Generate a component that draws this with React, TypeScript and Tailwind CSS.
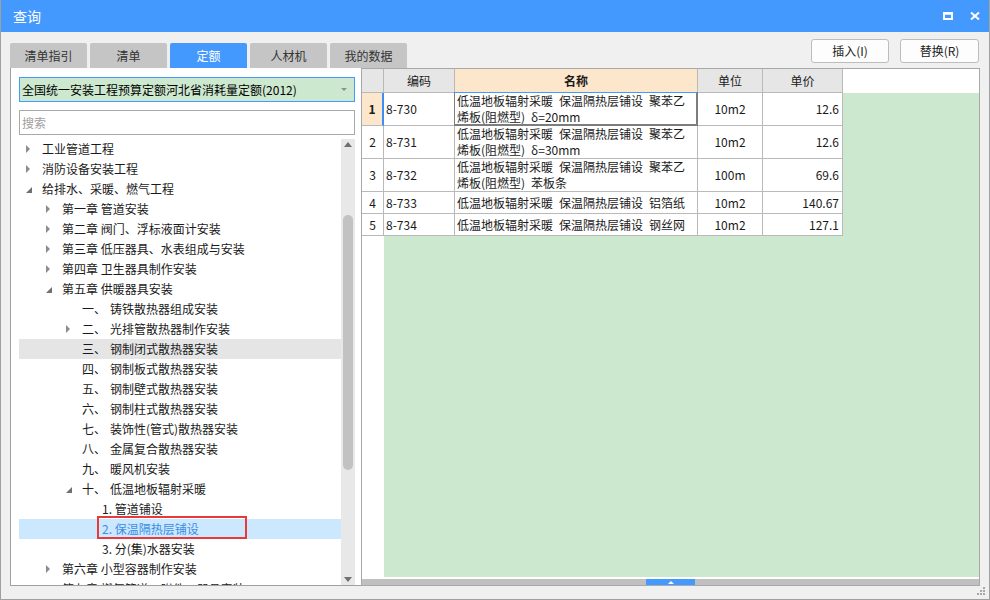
import React from "react";

type Node = { lvl: number; arrow?: "r" | "d"; num?: string; text: string; hover?: boolean; sel?: boolean };

const tree: Node[] = [
  { lvl: 0, arrow: "r", text: "工业管道工程" },
  { lvl: 0, arrow: "r", text: "消防设备安装工程" },
  { lvl: 0, arrow: "d", text: "给排水、采暖、燃气工程" },
  { lvl: 1, arrow: "r", text: "第一章 管道安装" },
  { lvl: 1, arrow: "r", text: "第二章 阀门、浮标液面计安装" },
  { lvl: 1, arrow: "r", text: "第三章 低压器具、水表组成与安装" },
  { lvl: 1, arrow: "r", text: "第四章 卫生器具制作安装" },
  { lvl: 1, arrow: "d", text: "第五章 供暖器具安装" },
  { lvl: 2, num: "一、", text: "铸铁散热器组成安装" },
  { lvl: 2, arrow: "r", num: "二、", text: "光排管散热器制作安装" },
  { lvl: 2, num: "三、", text: "钢制闭式散热器安装", hover: true },
  { lvl: 2, num: "四、", text: "钢制板式散热器安装" },
  { lvl: 2, num: "五、", text: "钢制壁式散热器安装" },
  { lvl: 2, num: "六、", text: "钢制柱式散热器安装" },
  { lvl: 2, num: "七、", text: "装饰性(管式)散热器安装" },
  { lvl: 2, num: "八、", text: "金属复合散热器安装" },
  { lvl: 2, num: "九、", text: "暖风机安装" },
  { lvl: 2, arrow: "d", num: "十、", text: "低温地板辐射采暖" },
  { lvl: 3, text: "1. 管道铺设" },
  { lvl: 3, text: "2. 保温隔热层铺设", sel: true },
  { lvl: 3, text: "3. 分(集)水器安装" },
  { lvl: 1, arrow: "r", text: "第六章 小型容器制作安装" },
  { lvl: 1, arrow: "r", text: "第七章 燃气管道、附件、器具安装" },
];

const indent = ["pl-[7px]", "pl-[27px]", "pl-[47px]", "pl-[67px]"];

const rows = [
  { n: "1", code: "8-730", name: ["低温地板辐射采暖\u2002保温隔热层铺设\u2002聚苯乙", "烯板(阻燃型)\u2002δ=20mm"], unit: "10m2", price: "12.6", h: "h-[33px]" },
  { n: "2", code: "8-731", name: ["低温地板辐射采暖\u2002保温隔热层铺设\u2002聚苯乙", "烯板(阻燃型)\u2002δ=30mm"], unit: "10m2", price: "12.6", h: "h-[33px]" },
  { n: "3", code: "8-732", name: ["低温地板辐射采暖\u2002保温隔热层铺设\u2002聚苯乙", "烯板(阻燃型)\u2002苯板条"], unit: "100m", price: "69.6", h: "h-[33px]" },
  { n: "4", code: "8-733", name: ["低温地板辐射采暖\u2002保温隔热层铺设\u2002铝箔纸"], unit: "10m2", price: "140.67", h: "h-[22px]" },
  { n: "5", code: "8-734", name: ["低温地板辐射采暖\u2002保温隔热层铺设\u2002钢丝网"], unit: "10m2", price: "127.1", h: "h-[22px]" },
];

function Arrow({ kind }: { kind?: "r" | "d" }) {
  if (kind === "r")
    return (
      <svg width="5" height="8" viewBox="0 0 5 8">
        <polygon points="0,0 4,4 0,8" fill="#8c8c8c" />
      </svg>
    );
  if (kind === "d")
    return (
      <svg width="6" height="6" viewBox="0 0 6 6" className="mt-[2px]">
        <polygon points="6,0 6,6 0,6" fill="#707070" />
      </svg>
    );
  return null;
}

export default function App() {
  const tabs = ["清单指引", "清单", "定额", "人材机", "我的数据"];
  return (
    <div className="w-[990px] h-[600px] flex flex-col bg-[#f0f0f0] border-l border-r border-b border-[#a0a0a0] relative overflow-hidden font-['Noto_Sans_CJK_SC','Microsoft_YaHei',sans-serif] text-[12px] text-[#1a1a1a]">
      {/* title bar */}
      <div className="h-[32px] shrink-0 bg-[#4499ff] flex items-center pl-[12px] pr-[9px] text-white">
        <span className="text-[14px]">查询</span>
        <div className="ml-auto flex items-center gap-[17px]">
          <svg width="10" height="8" viewBox="0 0 10 8">
            <rect x="1" y="1.5" width="8" height="5.5" fill="none" stroke="#fff" strokeWidth="2" />
            <rect x="0" y="0" width="10" height="2.5" fill="#fff" />
          </svg>
          <svg width="10" height="8" viewBox="0 0 10 8">
            <path d="M1 0.5 L9 7.5 M9 0.5 L1 7.5" stroke="#fff" strokeWidth="2" />
          </svg>
        </div>
      </div>

      {/* body */}
      <div className="flex-1 min-h-0 flex flex-row pl-[9px] pr-[9px] pb-[13px]">
        {/* left column */}
        <div className="w-[351px] shrink-0 flex flex-col pt-[11px] relative z-10">
          <div className="flex gap-[3px] h-[25px] shrink-0 w-[397px]">
            {tabs.map((t) => (
              <div
                key={t}
                className={
                  t === "定额"
                    ? "w-[77px] shrink-0 rounded-t-[2px] bg-[#4499ff] text-white flex items-center justify-center text-[12px]"
                    : "w-[77px] shrink-0 rounded-t-[2px] bg-[#c5c5c5] text-[#333] flex items-center justify-center text-[12px]"
                }
              >
                {t}
              </div>
            ))}
          </div>
          <div className="flex-1 min-h-0 bg-white border-l border-b border-[#a0a0a0] pl-[8px] pr-[6px] pt-[9px] flex flex-col">
            <div className="h-[25px] shrink-0 border border-[#4499ff] bg-[#cce8cf] flex items-center pl-[2px] pr-[7px] text-[12px] text-black">
              <span className="whitespace-nowrap">全国统一安装工程预算定额河北省消耗量定额(2012)</span>
              <svg width="6" height="3" viewBox="0 0 6 3" className="ml-auto">
                <polygon points="0,0 6,0 3,3" fill="#909090" />
              </svg>
            </div>
            <div className="h-[25px] shrink-0 mt-[8px] border border-[#a8a8a8] bg-white flex items-center pl-[2px] text-[12px] text-[#a0a0a0]">
              搜索
            </div>
            <div className="flex-1 min-h-0 mt-[4px] flex flex-row">
              <div className="flex-1 overflow-hidden">
                {tree.map((n, i) => (
                  <div
                    key={i}
                    className={
                      "h-[20px] flex items-center relative whitespace-nowrap text-[12px] " +
                      indent[n.lvl] +
                      (n.hover ? " bg-[#e5e5e5]" : "") +
                      (n.sel ? " bg-[#cce8ff] text-[#3a8ee6]" : "")
                    }
                  >
                    <div className="w-[16px] shrink-0 flex items-center">
                      <Arrow kind={n.arrow} />
                    </div>
                    {n.num ? <span className="w-[28px] shrink-0">{n.num}</span> : null}
                    <span>{n.text}</span>
                    {n.sel ? (
                      <div className="absolute left-[78px] top-[-3px] w-[150px] h-[23px] border-2 border-[#e83a3a]" />
                    ) : null}
                  </div>
                ))}
              </div>
              <div className="w-[14px] shrink-0 bg-[#e8e8e8] relative">
                <svg width="8" height="5" viewBox="0 0 8 5" className="absolute left-[3px] top-[3px]">
                  <polygon points="0,5 8,5 4,0" fill="#707070" />
                </svg>
                <div className="absolute left-[2px] top-[76px] w-[10px] h-[255px] rounded-full bg-[#c2c2c2]" />
                <svg width="8" height="5" viewBox="0 0 8 5" className="absolute left-[3px] bottom-[3px]">
                  <polygon points="0,0 8,0 4,5" fill="#707070" />
                </svg>
              </div>
            </div>
          </div>
        </div>

        {/* right column */}
        <div className="flex-1 min-w-0 flex flex-col">
          <div className="pt-[7px] h-[31px] shrink-0 flex justify-end gap-[11px] pr-[1px]">
            <div className="w-[78px] h-[24px] bg-[#fdfdfd] border border-[#bdbdbd] rounded-[3px] flex items-center justify-center text-[12px] text-[#222]">
              插入(I)
            </div>
            <div className="w-[79px] h-[24px] bg-[#fdfdfd] border border-[#bdbdbd] rounded-[3px] flex items-center justify-center text-[12px] text-[#222]">
              替换(R)
            </div>
          </div>
          <div className="mt-[5px] flex-1 min-h-0 border border-[#a8a8a8] bg-white flex flex-col">
            {/* header */}
            <div className="h-[24px] shrink-0 flex text-[12px]">
              <div className="w-[22px] bg-[#e6e6e6] border-r border-b border-[#b9b9b9]" />
              <div className="w-[71px] bg-[#e6e6e6] border-r border-b border-[#b9b9b9] flex items-center justify-center">编码</div>
              <div className="w-[243px] bg-[#fde7cc] border-r border-b border-[#b9b9b9] flex items-center justify-center font-bold">名称</div>
              <div className="w-[65px] bg-[#e6e6e6] border-r border-b border-[#b9b9b9] flex items-center justify-center">单位</div>
              <div className="w-[80px] bg-[#e6e6e6] border-r border-b border-[#b9b9b9] flex items-center justify-center">单价</div>
            </div>
            {/* body */}
            <div className="flex-1 min-h-0 flex flex-row">
              <div className="w-[22px] shrink-0 bg-white">
                {rows.map((r, i) => (
                  <div
                    key={r.n}
                    className={
                      "w-[22px] border-b border-[#b9b9b9] flex items-center justify-center text-[12px] " +
                      r.h +
                      (i === 0 ? " bg-[#fde7cc] font-bold border-r-2 border-r-[#3d8ef5]" : " border-r")
                    }
                  >
                    {r.n}
                  </div>
                ))}
              </div>
              <div className="flex-1 bg-[#cce8cf] flex flex-col">
                {rows.map((r, i) => (
                  <div key={r.n} className={"flex w-[459px] bg-white " + r.h}>
                    <div className="w-[71px] shrink-0 border-r border-b border-[#b9b9b9] flex items-center pl-[2px]">{r.code}</div>
                    <div className="w-[243px] shrink-0 border-r border-b border-[#b9b9b9] flex items-center pl-[2px] relative">
                      <div className="leading-[16px] whitespace-nowrap">
                        {r.name.map((l, k) => (
                          <div key={k}>{l}</div>
                        ))}
                      </div>
                      {i === 0 ? (
                        <div className="absolute left-[-1px] top-[-1px] right-[-1px] bottom-[-1px] border-l border-t border-r-2 border-b-2 border-[#7d7d7d] border-t-[#4499ff]" />
                      ) : null}
                    </div>
                    <div className="w-[65px] shrink-0 border-r border-b border-[#b9b9b9] flex items-center justify-center">{r.unit}</div>
                    <div className="w-[80px] shrink-0 border-r border-b border-[#b9b9b9] flex items-center justify-end pr-[3px]">{r.price}</div>
                  </div>
                ))}
              </div>
            </div>
            {/* bottom scrollbar */}
            <div className="h-[8px] shrink-0 border-t-2 border-white bg-[#c0c0c0] relative">
              <div className="absolute left-[284px] top-0 w-[49px] h-[6px] bg-[#4499ff] flex items-center justify-center">
                <svg width="6" height="3" viewBox="0 0 6 3">
                  <polygon points="0,3 6,3 3,0" fill="#fff" />
                </svg>
              </div>
            </div>
          </div>
        </div>
      </div>

      {/* resize grip */}
      <svg width="9" height="9" viewBox="0 0 9 9" className="absolute right-[3px] bottom-[3px]">
        <rect x="6" y="0" width="2" height="2" fill="#a8a8a8" />
        <rect x="3" y="3" width="2" height="2" fill="#a8a8a8" />
        <rect x="6" y="3" width="2" height="2" fill="#a8a8a8" />
        <rect x="0" y="6" width="2" height="2" fill="#a8a8a8" />
        <rect x="3" y="6" width="2" height="2" fill="#a8a8a8" />
        <rect x="6" y="6" width="2" height="2" fill="#a8a8a8" />
      </svg>
    </div>
  );
}
